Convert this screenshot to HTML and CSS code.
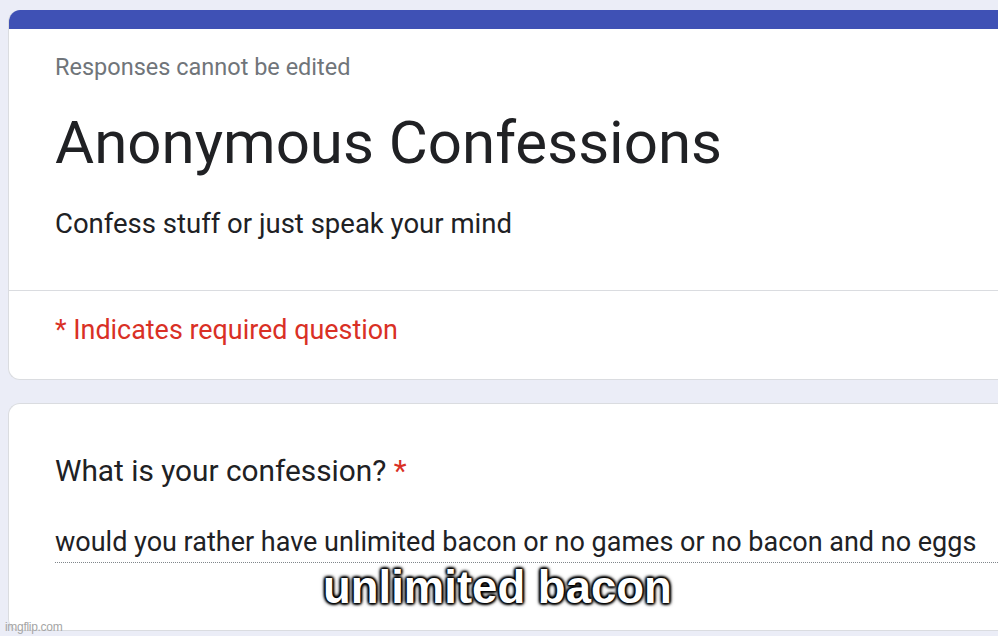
FILE: index.html
```html
<!DOCTYPE html>
<html>
<head>
<meta charset="utf-8">
<link rel="stylesheet" href="styles.css">
</head>
<body>
<div class="page">
  <section class="card header-card">
    <div class="accent"></div>
    <div class="header-body">
      <div class="meta">Responses cannot be edited</div>
      <h1 class="title">Anonymous Confessions</h1>
      <div class="desc">Confess stuff or just speak your mind</div>
    </div>
    <div class="divider"></div>
    <div class="required-note">* Indicates required question</div>
  </section>
  <section class="card question-card">
    <div class="question">What is your confession? <span class="star">*</span></div>
    <div class="answer">would you rather have unlimited bacon or no games or no bacon and no eggs</div>
  </section>
</div>
<div class="caption">unlimited bacon</div>
<div class="watermark">imgflip.com</div>
</body>
</html>
```
FILE: styles.css
```css
html, body {
  margin: 0;
  padding: 0;
}
body {
  width: 998px;
  height: 636px;
  overflow: hidden;
  background: #ebedf7;
  font-family: Roboto, "Liberation Sans", Arial, sans-serif;
  position: relative;
}
.page {
  padding: 10px 0 0 8px;
  display: flex;
  flex-direction: column;
  gap: 23px;
}
.card {
  background: #fff;
  border: 1px solid #dadce0;
  border-right: none;
  border-radius: 12px 0 0 12px;
  box-sizing: border-box;
  overflow: hidden;
}
.header-card {
  border-top: none;
}
.accent {
  height: 19px;
  background: #3f51b5;
}
.header-body {
  padding: 23px 0 48px 46px;
}
.meta {
  font-size: 23.5px;
  line-height: 30px;
  color: #70757a;
}
.title {
  margin: 26px 0 0 0;
  font-weight: 400;
  font-size: 60px;
  line-height: 70px;
  color: #202124;
}
.desc {
  margin-top: 28px;
  font-size: 27.5px;
  line-height: 36px;
  color: #202124;
}
.divider {
  height: 1px;
  background: #dadce0;
}
.required-note {
  padding: 21px 0 31px 46px;
  font-size: 26.9px;
  line-height: 36px;
  color: #d93025;
}
.question-card {
  padding: 49px 0 67px 46px;
  height: 228px;
}
.question {
  font-size: 29.8px;
  line-height: 36px;
  color: #202124;
}
.star {
  color: #d93025;
}
.answer {
  margin-top: 35px;
  font-size: 27px;
  line-height: 36px;
  color: #202124;
  white-space: nowrap;
  padding-bottom: 2px;
  border-bottom: 1px dotted #80868b;
}
.caption {
  position: absolute;
  left: 323px;
  top: 564px;
  font-family: "Liberation Sans", Arial, sans-serif;
  font-weight: 700;
  font-size: 45.5px;
  line-height: 48px;
  color: #fff;
  text-shadow: 0 0 2px #000, 0 0 3px #000, 1px 1px 3px #000, -1px -1px 3px #000, 1px -1px 3px #000, -1px 1px 3px #000, 0 0 5px #000;
}
.watermark {
  position: absolute;
  left: 5px;
  top: 620px;
  font-family: "Liberation Sans", Arial, sans-serif;
  font-size: 12px;
  line-height: 14px;
  color: #a5a5a5;
  letter-spacing: -0.3px;
}
```
